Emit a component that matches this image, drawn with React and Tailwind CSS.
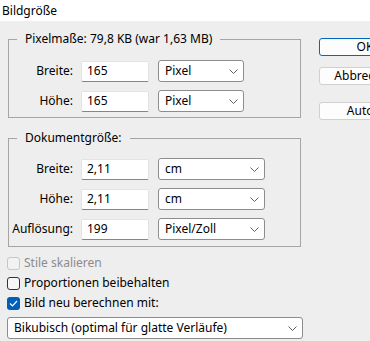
import React from 'react';

const font = { fontFamily: '"Noto Sans", "Open Sans", sans-serif' };

const Chevron = () => (
    <svg width="9" height="5" viewBox="0 0 9 5" className="shrink-0">
        <path d="M0.5 0.5 L4.5 4.5 L8.5 0.5" fill="none" stroke="#606060" strokeWidth="1" />
    </svg>
);

const Dropdown = ({ value, width }) => (
    <div className={`${width} h-[22px] flex items-center justify-between pl-[6px] pr-[5px] bg-white border border-[#8d8d8d] rounded-[3px]`}>
        <span>{value}</span>
        <Chevron />
    </div>
);

const Field = ({ label, value, unit, unitWidth }) => (
    <div className="flex items-center h-[22px]">
        <span className="w-[64px] text-right">{label}</span>
        <div className="ml-[8px] w-[68px] h-[21px] flex items-center pl-[5px] bg-white border border-[#e3e3e3] border-b-[#868686] rounded-[2px]">
            {value}
        </div>
        <div className="ml-[9px]">
            <Dropdown value={unit} width={unitWidth} />
        </div>
    </div>
);

const Group = ({ title, className, children }) => (
    <fieldset className={`ml-[1px] w-[293px] border border-[#a5a5a5] ${className}`}>
        <legend className="ml-[8px] px-[8px] leading-[16px]">{title}</legend>
        <div className="flex flex-col gap-[8px]">{children}</div>
    </fieldset>
);

const Check = ({ label, checked, disabled }) => (
    <div className="flex items-center h-[20px]">
        {checked ? (
            <div className="w-[13px] h-[13px] rounded-[3px] bg-[#005fb8] flex items-center justify-center">
                <svg width="9" height="7" viewBox="0 0 9 7">
                    <path d="M1 3.5 L3.5 6 L8 1" fill="none" stroke="white" strokeWidth="1.2" />
                </svg>
            </div>
        ) : (
            <div className={`w-[13px] h-[13px] rounded-[3px] border ${disabled ? 'border-[#c6c6c6] bg-[#f2f2f2]' : 'border-[#333333] bg-[#f7f7f7]'}`} />
        )}
        <span className={`ml-[4px] ${disabled ? 'text-[#8c8c8c]' : ''}`}>{label}</span>
    </div>
);

const Button = ({ children, primary, className }) => (
    <div className={`w-[92px] h-[18px] flex items-center justify-center bg-[#fdfdfd] rounded-[3px] border ${primary ? 'border-[#0067c0]' : 'border-[#d0d0d0]'} ${className}`}>
        {children}
    </div>
);

export default function App() {
    return (
        <div className="w-[370px] h-[341px] overflow-hidden bg-[#eeeeee] text-[12px] text-black" style={font}>
            <div className="h-[21px] bg-white pl-[2px] flex items-center">Bildgröße</div>
            <div className="flex">
                <div className="pl-[7px] w-[303px] shrink-0">
                    <Group title="Pixelmaße: 79,8 KB (war 1,63 MB)" className="mt-[10px] pt-[13px] pb-[5px]">
                        <Field label="Breite:" value="165" unit="Pixel" unitWidth="w-[86px]" />
                        <Field label="Höhe:" value="165" unit="Pixel" unitWidth="w-[86px]" />
                    </Group>
                    <Group title="Dokumentgröße:" className="mt-[12px] pt-[12px] pb-[6px]">
                        <Field label="Breite:" value="2,11" unit="cm" unitWidth="w-[107px]" />
                        <Field label="Höhe:" value="2,11" unit="cm" unitWidth="w-[107px]" />
                        <Field label="Auflösung:" value="199" unit="Pixel/Zoll" unitWidth="w-[107px]" />
                    </Group>
                    <div className="mt-[6px]">
                        <Check label="Stile skalieren" disabled />
                        <Check label="Proportionen beibehalten" />
                        <Check label="Bild neu berechnen mit:" checked />
                    </div>
                    <div className="mt-[4px]">
                        <Dropdown value="Bikubisch (optimal für glatte Verläufe)" width="w-[296px]" />
                    </div>
                </div>
                <div className="ml-[16px] mt-[17px] shrink-0">
                    <Button primary>OK</Button>
                    <Button className="mt-[11px]">Abbrechen</Button>
                    <Button className="mt-[17px]">Auto...</Button>
                </div>
            </div>
        </div>
    );
}
